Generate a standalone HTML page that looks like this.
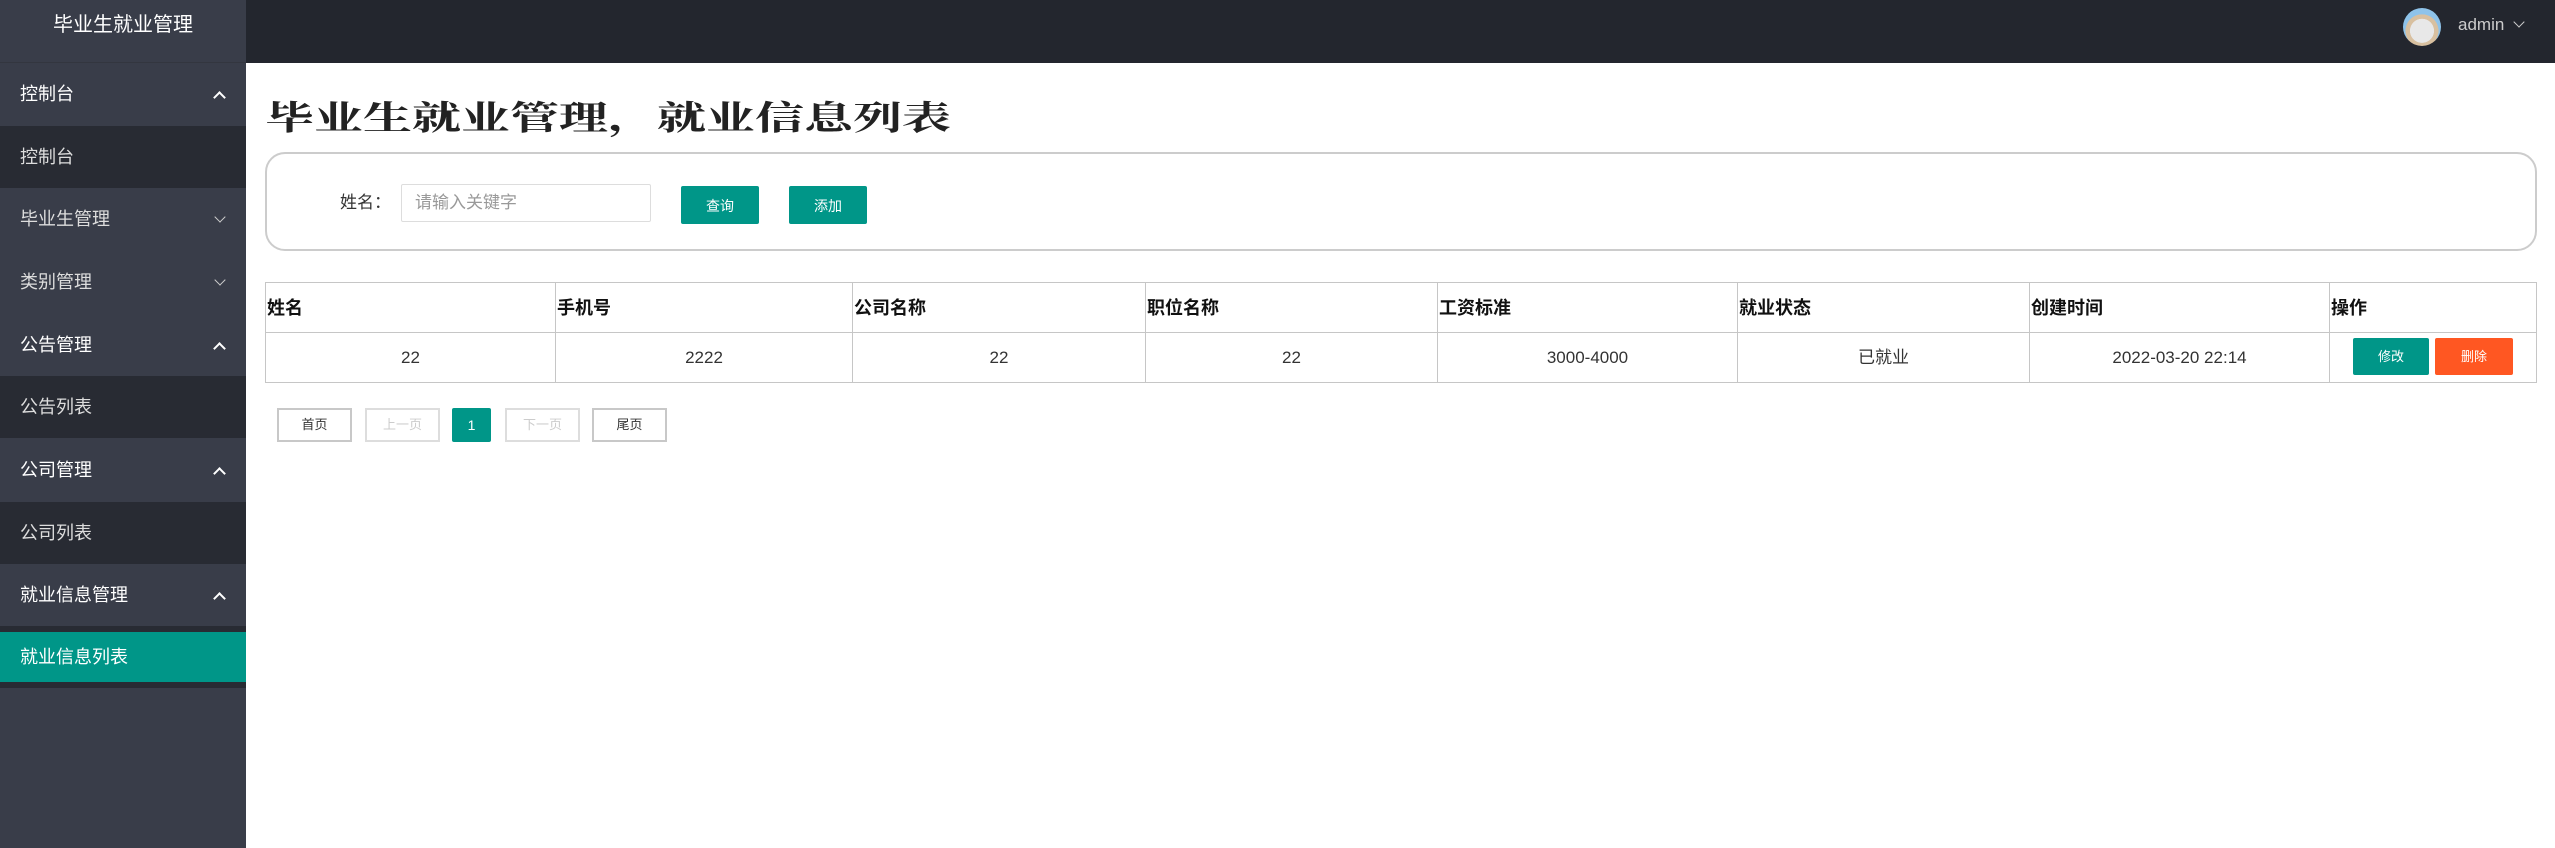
<!DOCTYPE html>
<html><head><meta charset="utf-8">
<style>
*{margin:0;padding:0;box-sizing:border-box}
body{width:2555px;height:848px;overflow:hidden;background:#fff;font-family:"Liberation Sans","Noto Sans CJK SC",sans-serif;position:relative}
.abs{position:absolute}
#side{left:0;top:0;width:246px;height:848px;background:#393d49}
#logo{left:0;top:0;width:246px;height:63px;background:#393d49;color:#fff;font-size:20px;text-align:center;line-height:50px;border-bottom:1px solid #33363f}
#hdr{left:246px;top:0;width:2309px;height:63px;background:#23262e}
.it{position:absolute;left:0;width:246px;height:63px;line-height:63px;padding-left:20px;font-size:18px;color:#fff}
.sub{position:absolute;left:0;width:246px;height:62px;background:#282b33}
.sub span{position:absolute;left:20px;top:0;line-height:62px;font-size:18px;color:#ddd}
.up:after{content:"";position:absolute;right:22px;top:30px;width:7px;height:7px;border-left:2px solid #fff;border-top:2px solid #fff;transform:rotate(45deg)}
.dn:after{content:"";position:absolute;right:22px;top:25px;width:7px;height:7px;border-right:1.5px solid #ccc;border-bottom:1.5px solid #ccc;transform:rotate(45deg)}
.grp{color:#fff}
.plain{color:#ddd}
#title{left:265px;top:86px;font-family:"Noto Serif CJK SC","WenQuanYi Zen Hei",serif;font-weight:bold;font-size:49px;color:#222;transform:scaleY(0.68);transform-origin:0 50%;white-space:nowrap;line-height:60px}
#box{left:265px;top:152px;width:2272px;height:99px;border:2px solid #ccc;border-radius:20px}
.btn{position:absolute;background:#009688;color:#fff;font-size:14px;text-align:center;border-radius:2px}
table{position:absolute;left:265px;top:282px;width:2272px;border-collapse:collapse}
td,th{border:1px solid #c6c6c6;height:50px;font-size:18px;line-height:24px}
th{text-align:left;padding-left:1px;font-weight:bold;color:#111}
td{text-align:center;color:#333;font-size:17px}
.pg{position:absolute;top:408px;height:34px;width:75px;border:2px solid #c8c8c8;text-align:center;line-height:30px;font-size:13px;color:#333}
.pg.dis{border-color:#ddd;color:#ccc}
</style></head><body>
<div id="side" class="abs"></div>
<div id="logo" class="abs">毕业生就业管理</div>
<div id="hdr" class="abs"></div>
<div class="abs" style="left:2403px;top:8px;width:38px;height:38px;border-radius:50%;background:radial-gradient(circle at 50% 60%,#e8e8e8 0 40%,#d8c0a0 41% 55%,#8ec3ea 56%)"></div>
<div class="abs" style="left:2458px;top:13px;font-size:17px;color:#ccc;line-height:24px">admin</div>
<div class="abs" style="left:2515px;top:18px;width:8px;height:8px;border-right:1.5px solid #ccc;border-bottom:1.5px solid #ccc;transform:rotate(45deg)"></div>

<div class="it grp up" style="top:63px">控制台</div>
<div class="sub" style="top:126px"><span>控制台</span></div>
<div class="it plain dn" style="top:188px">毕业生管理</div>
<div class="it plain dn" style="top:251px">类别管理</div>
<div class="it grp up" style="top:314px">公告管理</div>
<div class="sub" style="top:376px"><span>公告列表</span></div>
<div class="it grp up" style="top:439px">公司管理</div>
<div class="sub" style="top:502px"><span>公司列表</span></div>
<div class="it grp up" style="top:564px">就业信息管理</div>
<div class="sub" style="top:626px"><div class="abs" style="left:0;top:6px;width:246px;height:50px;background:#009688"></div><span style="color:#fff">就业信息列表</span></div>

<div id="title" class="abs">毕业生就业管理，就业信息列表</div>
<div id="box" class="abs"></div>
<div class="abs" style="left:340px;top:190px;font-size:17px;color:#333;line-height:26px">姓名：</div>
<div class="abs" style="left:401px;top:184px;width:250px;height:38px;border:1px solid #ddd;border-radius:2px;font-size:17px;color:#999;line-height:36px;padding-left:13px">请输入关键字</div>
<div class="btn" style="left:681px;top:186px;width:78px;height:38px;line-height:40px">查询</div>
<div class="btn" style="left:789px;top:186px;width:78px;height:38px;line-height:40px">添加</div>

<table>
<tr><th style="width:290px">姓名</th><th style="width:297px">手机号</th><th style="width:293px">公司名称</th><th style="width:292px">职位名称</th><th style="width:300px">工资标准</th><th style="width:292px">就业状态</th><th style="width:300px">创建时间</th><th>操作</th></tr>
<tr><td>22</td><td>2222</td><td>22</td><td>22</td><td>3000-4000</td><td>已就业</td><td>2022-03-20 22:14</td><td></td></tr>
</table>
<div class="btn" style="left:2353px;top:338px;width:76px;height:37px;line-height:37px;font-size:13px">修改</div>
<div class="btn" style="left:2435px;top:338px;width:78px;height:37px;line-height:37px;font-size:13px;background:#ff5722">删除</div>

<div class="pg" style="left:277px">首页</div>
<div class="pg dis" style="left:365px">上一页</div>
<div class="abs" style="left:452px;top:408px;width:39px;height:34px;background:#009688;border-radius:2px;color:#fff;font-size:14px;text-align:center;line-height:34px">1</div>
<div class="pg dis" style="left:505px">下一页</div>
<div class="pg" style="left:592px">尾页</div>
</body></html>
